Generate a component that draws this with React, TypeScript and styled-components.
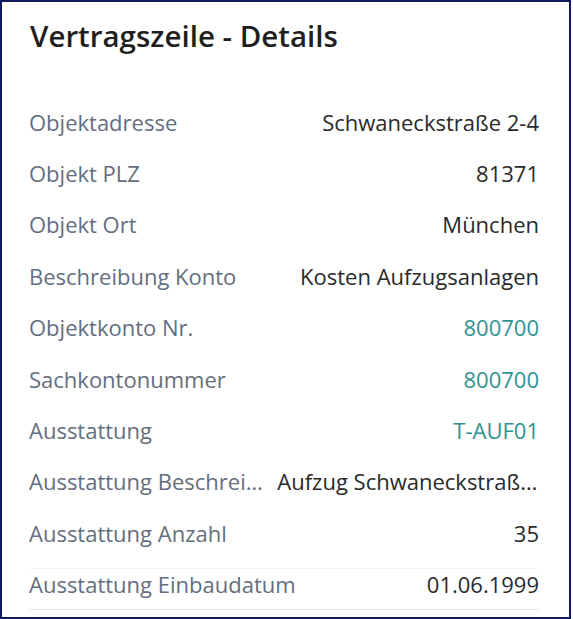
import React from "react";
import styled, { createGlobalStyle } from "styled-components";

const GlobalStyle = createGlobalStyle`
  html, body {
    margin: 0;
    padding: 0;
    background: #ffffff;
  }
  * { box-sizing: border-box; }
`;

const Card = styled.section`
  width: 571px;
  height: 619px;
  border: 2px solid #0d1a5e;
  background: #ffffff;
  padding: 0 30px 0 27px;
  font-family: "Open Sans", "Noto Sans", sans-serif;
  display: flex;
  flex-direction: column;
`;

const Title = styled.h1`
  margin: 0;
  height: 94px;
  padding-top: 14px;
  padding-left: 1px;
  font-size: 29.5px;
  line-height: 40px;
  font-weight: 600;
  color: #1f1f1f;
`;

const List = styled.div`
  display: flex;
  flex-direction: column;
`;

const Row = styled.div<{ $divided?: boolean }>`
  display: flex;
  justify-content: space-between;
  align-items: center;
  gap: 8px;
  height: 51.4px;
  font-size: 22px;
  line-height: 30px;
  ${(p) =>
    p.$divided &&
    `
    border-bottom: 1px solid #e8e8e8;
    background: linear-gradient(#f3f3f3, #f3f3f3) no-repeat 0 9px / 100% 1px;
  `}
`;

const Label = styled.span`
  flex: 0 1 auto;
  min-width: 0;
  color: #646e7e;
  white-space: nowrap;
  overflow: hidden;
  text-overflow: ellipsis;
`;

const Value = styled.span<{ $link?: boolean }>`
  flex: 0 1 auto;
  min-width: 0;
  color: ${(p) => (p.$link ? "#2e9393" : "#2a2a2a")};
  text-align: right;
  white-space: nowrap;
  overflow: hidden;
  text-overflow: ellipsis;
`;

type Field = { label: string; value: string; link?: boolean };

const fields: Field[] = [
  { label: "Objektadresse", value: "Schwaneckstraße 2-4" },
  { label: "Objekt PLZ", value: "81371" },
  { label: "Objekt Ort", value: "München" },
  { label: "Beschreibung Konto", value: "Kosten Aufzugsanlagen" },
  { label: "Objektkonto Nr.", value: "800700", link: true },
  { label: "Sachkontonummer", value: "800700", link: true },
  { label: "Ausstattung", value: "T-AUF01", link: true },
  { label: "Ausstattung Beschreibung", value: "Aufzug Schwaneckstraße 2-4" },
  { label: "Ausstattung Anzahl", value: "35" },
  { label: "Ausstattung Einbaudatum", value: "01.06.1999" },
];

export default function App() {
  return (
    <>
      <GlobalStyle />
      <Card>
        <Title>Vertragszeile - Details</Title>
        <List>
          {fields.map((f, i) => (
            <Row key={f.label} $divided={i === fields.length - 1}>
              <Label>{f.label}</Label>
              <Value $link={f.link}>{f.value}</Value>
            </Row>
          ))}
        </List>
      </Card>
    </>
  );
}
